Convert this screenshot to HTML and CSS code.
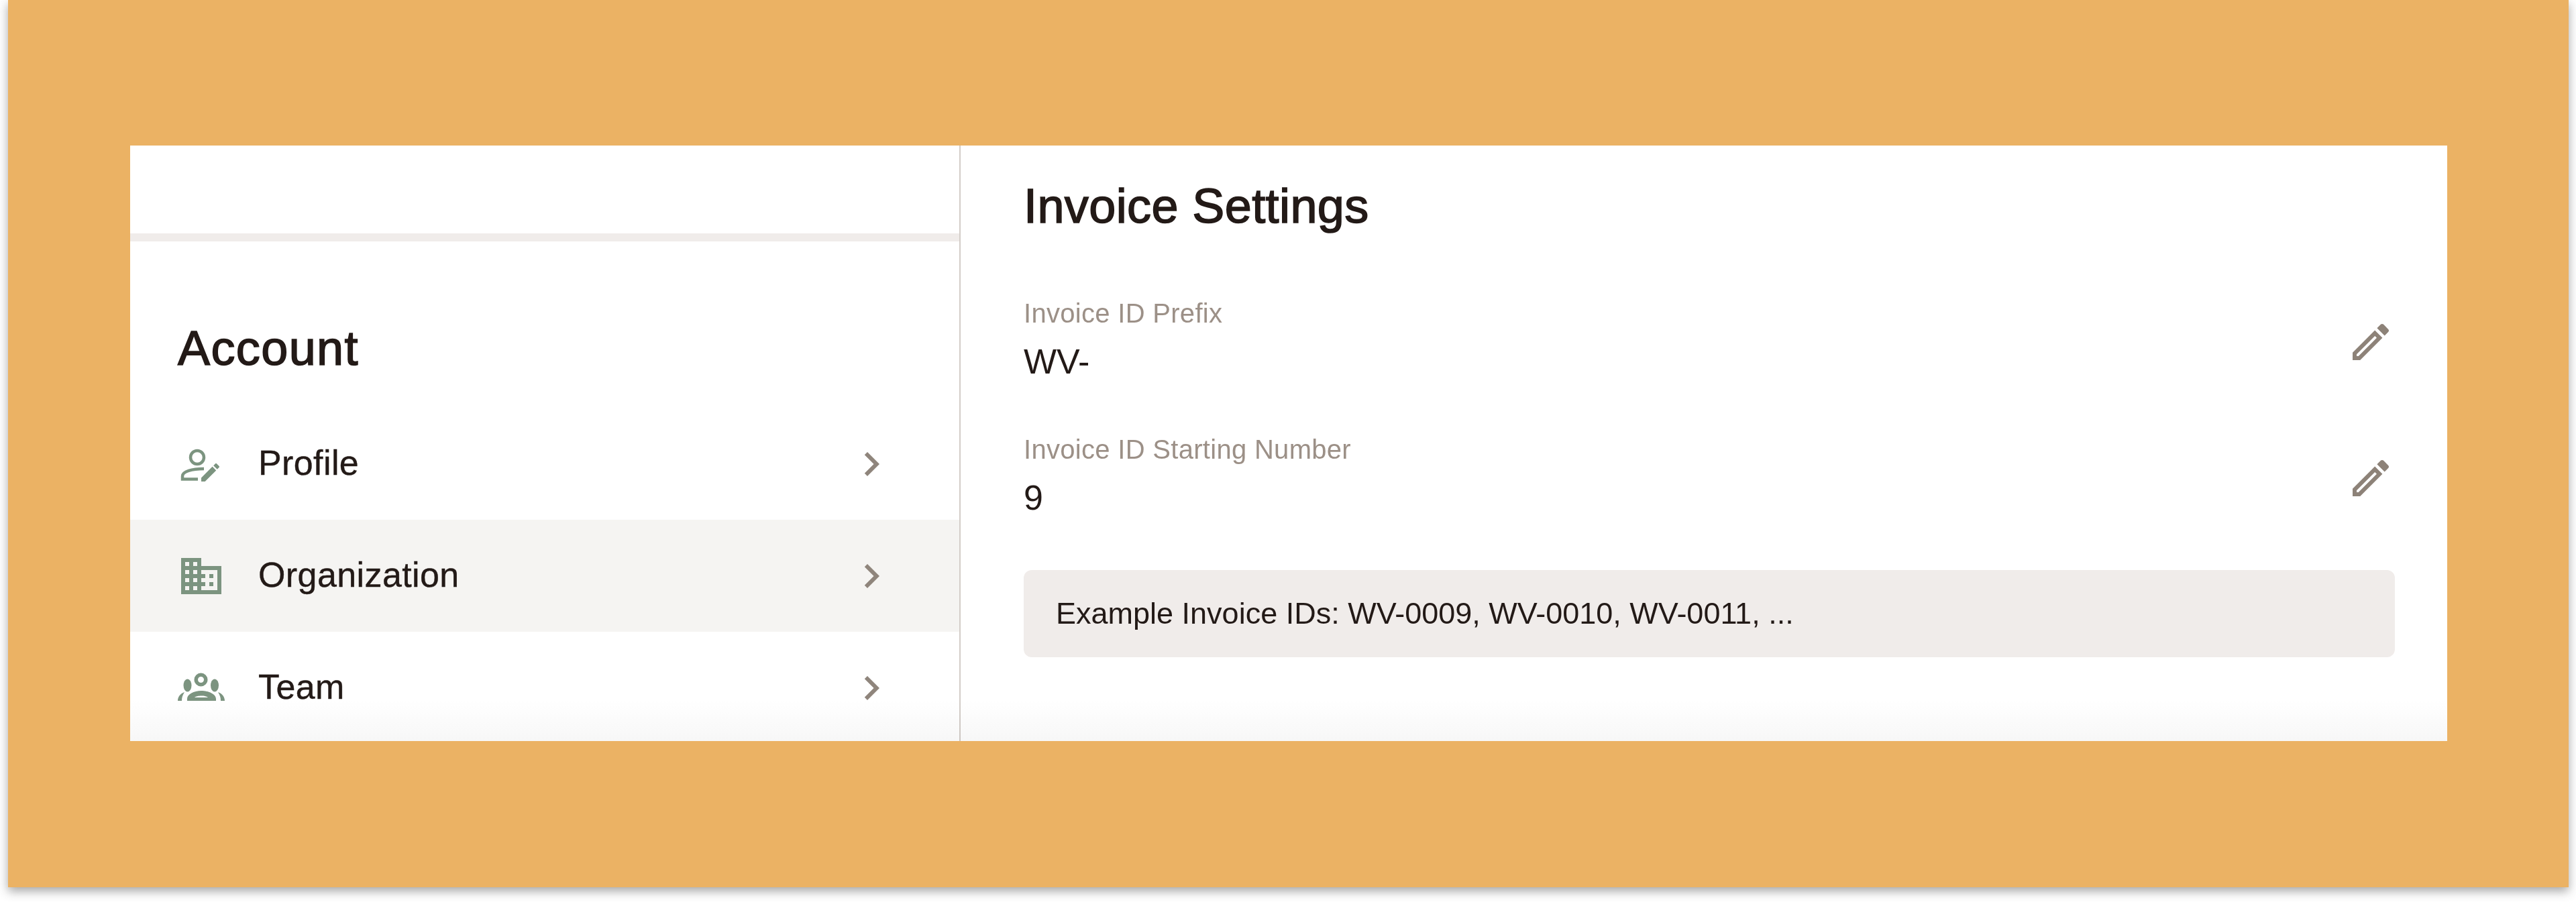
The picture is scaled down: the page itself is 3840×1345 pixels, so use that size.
FILE: index.html
```html
<!DOCTYPE html>
<html lang="en">
<head>
<meta charset="utf-8">
<title>Invoice Settings</title>
<link rel="stylesheet" href="styles.css">
</head>
<body>
<div class="frame">
  <div class="card">
    <aside class="sidebar">
      <div class="sidebar-top"></div>
      <h2 class="account-title">Account</h2>
      <nav class="nav">
        <a class="nav-row">
          <svg class="icon nav-icon" viewBox="0 0 72 72">
            <circle cx="30" cy="26" r="10" fill="none" stroke="currentColor" stroke-width="4.5"/>
            <path d="M31 58.500H8V54C8 47 22 43 40 43" fill="none" stroke="currentColor" stroke-width="4.5"/>
            <path transform="translate(31.5 30.5) scale(1.5)" d="M3 17.25V21h3.75L17.81 9.94l-3.75-3.75L3 17.25zM20.71 7.04c.39-.39.39-1.02 0-1.41l-2.34-2.34c-.39-.39-1.02-.39-1.41 0l-1.83 1.83 3.75 3.75 1.83-1.83z" fill="currentColor"/>
          </svg>
          <span class="nav-label">Profile</span>
          <svg class="icon chevron" viewBox="0 0 24 24"><path d="M10 6L8.59 7.41 13.17 12l-4.58 4.59L10 18l6-6z"/></svg>
        </a>
        <a class="nav-row nav-row-active">
          <svg class="icon nav-icon" viewBox="0 0 24 24"><path fill="currentColor" d="M12 7V3H2v18h20V7H12zM6 19H4v-2h2v2zm0-4H4v-2h2v2zm0-4H4V9h2v2zm0-4H4V5h2v2zm4 12H8v-2h2v2zm0-4H8v-2h2v2zm0-4H8V9h2v2zm0-4H8V5h2v2zm10 12h-8v-2h2v-2h-2v-2h2v-2h-2V9h8v10zm-2-8h-2v2h2v-2zm0 4h-2v2h2v-2z"/></svg>
          <span class="nav-label">Organization</span>
          <svg class="icon chevron" viewBox="0 0 24 24"><path d="M10 6L8.59 7.41 13.17 12l-4.58 4.59L10 18l6-6z"/></svg>
        </a>
        <a class="nav-row">
          <svg class="icon nav-icon" viewBox="0 0 72 72">
            <g transform="translate(0 12)" fill="currentColor">
              <path fill-rule="evenodd" d="M35.5 1.5a10 10 0 1 0 0 20a10 10 0 1 0 0-20zM35.5 7a4.5 4.5 0 1 1 0 9a4.5 4.5 0 1 1 0-9z"/>
              <ellipse cx="15.5" cy="20" rx="6" ry="9.5"/>
              <ellipse cx="56" cy="20" rx="6" ry="9.5"/>
              <path fill-rule="evenodd" d="M15 43V40C15 33 25 28 36 28C47 28 58 33 58 40V43ZM26 38H46C43 34.500 29 34.500 26 38Z"/>
              <path d="M11 30C5 32 1 37 1 43H7C7 38 8 35 11 30ZM61 30C67 32 71 37 71 43H65C65 38 64 35 61 30Z"/>
            </g>
          </svg>
          <span class="nav-label">Team</span>
          <svg class="icon chevron" viewBox="0 0 24 24"><path d="M10 6L8.59 7.41 13.17 12l-4.58 4.59L10 18l6-6z"/></svg>
        </a>
      </nav>
    </aside>
    <main class="main">
      <h1 class="main-title">Invoice Settings</h1>
      <div class="field field-first">
        <div class="field-text">
          <div class="field-label">Invoice ID Prefix</div>
          <div class="field-value">WV-</div>
        </div>
        <svg class="icon edit" viewBox="0 0 24 24"><path d="M14.06 9.02l.92.92L5.92 19H5v-.92l9.06-9.06M17.66 3c-.25 0-.51.1-.7.29l-1.83 1.83 3.75 3.75 1.83-1.83c.39-.39.39-1.02 0-1.41l-2.34-2.34c-.2-.2-.45-.29-.71-.29zm-3.6 3.19L3 17.25V21h3.75L17.81 9.94l-3.75-3.75z"/></svg>
      </div>
      <div class="field">
        <div class="field-text">
          <div class="field-label">Invoice ID Starting Number</div>
          <div class="field-value">9</div>
        </div>
        <svg class="icon edit" viewBox="0 0 24 24"><path d="M14.06 9.02l.92.92L5.92 19H5v-.92l9.06-9.06M17.66 3c-.25 0-.51.1-.7.29l-1.83 1.83 3.75 3.75 1.83-1.83c.39-.39.39-1.02 0-1.41l-2.34-2.34c-.2-.2-.45-.29-.71-.29zm-3.6 3.19L3 17.25V21h3.75L17.81 9.94l-3.75-3.75z"/></svg>
      </div>
      <div class="example">Example Invoice IDs: WV-0009, WV-0010, WV-0011, ...</div>
    </main>
    <div class="fade"></div>
  </div>
</div>
</body>
</html>
```
FILE: styles.css
```css
* { box-sizing: border-box; }
html, body { margin: 0; height: 100%; overflow: hidden; }
body { background: #fff; font-family: "Liberation Sans", Arial, sans-serif; color: #231a17; }
.frame {
  margin-left: 12px;
  width: 3817px;
  height: 1323px;
  padding: 217px 181px 218px 182px;
  background: #ebb264;
  box-shadow: 0 6px 14px rgba(60, 60, 60, .45);
}
.card {
  position: relative;
  display: flex;
  height: 888px;
  background: #fff;
  overflow: hidden;
}
.sidebar { width: 1238px; flex: none; border-right: 2px solid #d3cdc8; }
.sidebar-top { height: 143px; border-bottom: 12px solid #f0ecea; }
.account-title {
  margin: 0;
  padding: 118px 0 0 71px;
  font-size: 72px;
  line-height: 82px;
  letter-spacing: 1.4px;
  font-weight: 400;
  -webkit-text-stroke: 1.6px #231a17;
}
.nav { margin-top: 48px; }
.nav-row { display: flex; align-items: center; height: 167px; padding: 0 95px 0 70px; }
.nav-row-active { background: #f5f4f2; }
.icon { display: block; width: 72px; height: 72px; flex: none; }
.nav-icon { color: #7c9480; }
.nav-label {
  margin: 0 0 4px 49px;
  font-size: 52px;
  line-height: 60px;
  letter-spacing: .4px;
  -webkit-text-stroke: .4px #231a17;
}
.chevron { margin-left: auto; fill: #8f857c; }
.main { flex: 1; padding: 0 78px 0 94px; }
.main-title {
  margin: 0;
  padding-top: 50px;
  font-size: 72px;
  line-height: 80px;
  letter-spacing: .4px;
  font-weight: 400;
  -webkit-text-stroke: 1.6px #231a17;
}
.field { display: flex; align-items: center; justify-content: space-between; height: 127px; margin-top: 76px; }
.field-first { margin-top: 97px; }
.field-label { font-size: 40px; line-height: 46px; letter-spacing: .3px; color: #9c9087; }
.field-value { margin-top: 19px; padding-bottom: 2px; font-size: 52px; line-height: 60px; }
.edit { margin-top: 5px; fill: #8d8278; }
.example {
  margin-top: 76px;
  height: 130px;
  padding-left: 48px;
  border-radius: 12px;
  background: #f0ecea;
  font-size: 45px;
  line-height: 130px;
}
.fade {
  position: absolute;
  left: 0;
  right: 0;
  bottom: 0;
  height: 60px;
  background: linear-gradient(to bottom, #fff, #f7f7f7);
  mix-blend-mode: multiply;
  pointer-events: none;
}
```
